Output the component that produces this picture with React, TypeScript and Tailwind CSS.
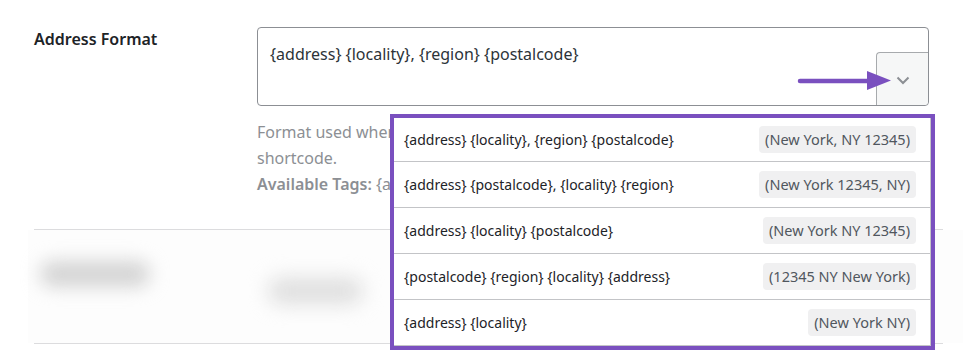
import React from "react";

const options: { fmt: string; ex: string }[] = [
  { fmt: "{address} {locality}, {region} {postalcode}", ex: "(New York, NY 12345)" },
  { fmt: "{address} {postalcode}, {locality} {region}", ex: "(New York 12345, NY)" },
  { fmt: "{address} {locality} {postalcode}", ex: "(New York NY 12345)" },
  { fmt: "{postalcode} {region} {locality} {address}", ex: "(12345 NY New York)" },
  { fmt: "{address} {locality}", ex: "(New York NY)" },
];

export default function App() {
  return (
    <div
      className="relative w-[963px] h-[354px] overflow-hidden bg-white"
      style={{ fontFamily: '"Noto Sans", "Open Sans", sans-serif' }}
    >
      {/* Form row */}
      <div className="flex pl-[34px] pt-[27px]">
        <div className="w-[223px] text-[16px] leading-[24px] font-semibold text-[#1d2327]">
          Address Format
        </div>
        <div className="w-[672px]">
          <div className="relative h-[79px] rounded-[4px] border border-[#8c8f94] bg-white pl-[12px] pt-[14px] text-[16px] leading-[24px] text-[#2c3338]">
            {"{address} {locality}, {region} {postalcode}"}
            <div className="absolute right-0 bottom-0 flex h-[53px] w-[52px] items-center justify-center rounded-tl-[4px] rounded-br-[4px] border-l border-t border-[#a7aaad] bg-[#f6f7f7]">
              <svg width="14" height="9" viewBox="0 0 14 9" className="mt-[2px]">
                <polyline points="1.5,1.5 7,7 12.5,1.5" fill="none" stroke="#8c8f94" strokeWidth="2" />
              </svg>
            </div>
          </div>
          <div className="mt-[13px] text-[16px] leading-[26px] text-[#8c8f94]">
            <div>Format used when the address is displayed using the contact</div>
            <div>shortcode.</div>
            <div>
              <span className="font-semibold">Available Tags:</span>{" "}
              {"{address}, {locality}, {region}, {postalcode}, {country}"}
            </div>
          </div>
        </div>
      </div>

      {/* Divider */}
      <div className="ml-[34px] mt-[32px] mr-[20px] border-t border-[#dcdcde]" />

      {/* Blurred row */}
      <div className="relative ml-[28px] flex h-[113px] items-start bg-[#fdfdfd]">
        <div className="mt-[31px] ml-[12px] h-[26px] w-[110px] rounded-full bg-[#d4d4d4] blur-[9px]" />
        <div className="mt-[48px] ml-[118px] h-[26px] w-[95px] rounded-full bg-[#dedede] blur-[10px]" />
        <div className="mt-[31px] ml-[123px] h-[50px] w-[300px] border-y border-[#8c8f94]" />
      </div>

      {/* Divider */}
      <div className="ml-[34px] mr-[20px] border-t border-[#dcdcde]" />

      {/* Dropdown */}
      <div className="absolute left-[390px] top-[114px] w-[545px] border-4 border-[#7a50bf] bg-white">
        <div className="border-r border-b border-[#c3c4c7]">
          {options.map((o, i) => (
            <div
              key={o.fmt}
              className={`flex items-center justify-between pl-[10px] pr-[14px] ${
                i === 0 ? "h-[44px]" : i === options.length - 1 ? "h-[45px]" : "h-[46px]"
              } ${i < options.length - 1 ? "border-b border-[#c3c4c7]" : ""}`}
            >
              <span className="text-[14px] text-[#1d2327]">{o.fmt}</span>
              <span className="rounded-[4px] bg-[#f0f0f1] px-[6px] py-[3px] text-[14.5px] leading-[21px] text-[#50575e]">
                {o.ex}
              </span>
            </div>
          ))}
        </div>
      </div>

      {/* Annotation arrow */}
      <svg className="absolute left-[795px] top-[66px]" width="100" height="30" viewBox="795 66 100 30">
        <line x1="800" y1="81" x2="870" y2="81" stroke="#7a50bf" strokeWidth="4.5" strokeLinecap="round" />
        <polygon points="867,71 891,80.5 867,90" fill="#7a50bf" />
      </svg>
    </div>
  );
}
